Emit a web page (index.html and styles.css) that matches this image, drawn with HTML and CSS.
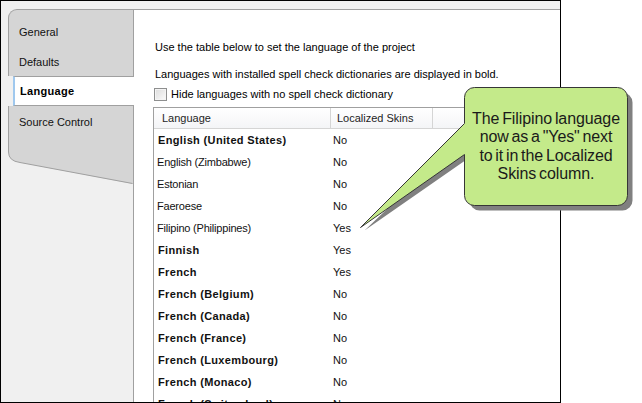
FILE: index.html
```html
<!DOCTYPE html>
<html>
<head>
<meta charset="utf-8">
<link rel="stylesheet" href="styles.css">
</head>
<body>
<div class="stage">
  <div class="frame">
    <div class="main">
      <div class="tabs">
        <div class="tabs-top">
          <div class="tab tab-first">General</div>
          <div class="tab tab-second">Defaults</div>
        </div>
        <div class="tab-selected">Language</div>
        <div class="tabs-bottom">
          <div class="tab">Source Control</div>
        </div>
        <svg class="tail" width="125" height="36" viewBox="0 0 125 36">
          <path d="M0,0 H125 V34 L12,12.5 Q0.5,11 0.5,2 Z" fill="#d5d5d5"/>
          <path d="M0.5,0 V2 Q0.5,11 12,12.5 L124.5,33.5" fill="none" stroke="#a0a0a0" stroke-width="1"/>
        </svg>
      </div>
      <div class="panel">
        <p class="line line-first">Use the table below to set the language of the project</p>
        <p class="line line-second">Languages with installed spell check dictionaries are displayed in bold.</p>
        <div class="check-row">
          <span class="checkbox"></span>
          <span class="check-label">Hide languages with no spell check dictionary</span>
        </div>
        <div class="table">
          <div class="thead">
            <div class="th col-name">Language</div>
            <div class="th col-skin">Localized Skins</div>
            <div class="th col-rest"></div>
          </div>
          <div class="row bold"><div class="cell col-name">English (United States)</div><div class="cell col-skin">No</div></div>
          <div class="row"><div class="cell col-name">English (Zimbabwe)</div><div class="cell col-skin">No</div></div>
          <div class="row"><div class="cell col-name">Estonian</div><div class="cell col-skin">No</div></div>
          <div class="row"><div class="cell col-name">Faeroese</div><div class="cell col-skin">No</div></div>
          <div class="row"><div class="cell col-name">Filipino (Philippines)</div><div class="cell col-skin">Yes</div></div>
          <div class="row bold"><div class="cell col-name">Finnish</div><div class="cell col-skin">Yes</div></div>
          <div class="row bold"><div class="cell col-name">French</div><div class="cell col-skin">Yes</div></div>
          <div class="row bold"><div class="cell col-name">French (Belgium)</div><div class="cell col-skin">No</div></div>
          <div class="row bold"><div class="cell col-name">French (Canada)</div><div class="cell col-skin">No</div></div>
          <div class="row bold"><div class="cell col-name">French (France)</div><div class="cell col-skin">No</div></div>
          <div class="row bold"><div class="cell col-name">French (Luxembourg)</div><div class="cell col-skin">No</div></div>
          <div class="row bold"><div class="cell col-name">French (Monaco)</div><div class="cell col-skin">No</div></div>
          <div class="row bold"><div class="cell col-name">French (Switzerland)</div><div class="cell col-skin">No</div></div>
        </div>
      </div>
    </div>
  </div>

  <svg class="callout-shape" width="287" height="160" viewBox="0 0 287 160">
    <g transform="translate(0.5,0.5)">
      <path class="shadow" d="M124,10 H267 A10,10 0 0 1 277,20 V118 A10,10 0 0 1 267,128 H124 A10,10 0 0 1 114,118 V75 L9,148 L114,48 V20 A10,10 0 0 1 124,10 Z"/>
      <path class="bubble" d="M119,5 H262 A10,10 0 0 1 272,15 V113 A10,10 0 0 1 262,123 H119 A10,10 0 0 1 109,113 V72 L5,145 L109,41 V15 A10,10 0 0 1 119,5 Z"/>
    </g>
  </svg>
  <div class="callout-text">The Filipino language<br>now as a "Yes" next<br>to it in the Localized<br>Skins column.</div>
</div>
</body>
</html>
```
FILE: styles.css
```css
html, body {
  margin: 0;
  padding: 0;
  background: #ffffff;
}

.stage {
  position: relative;
  width: 642px;
  height: 403px;
  overflow: hidden;
  font-family: "Liberation Sans", Arial, sans-serif;
  font-size: 11px;
  color: #000;
}

.frame {
  box-sizing: border-box;
  width: 561px;
  height: 403px;
  border: 1px solid #000;
  background: #f0f0f0;
  padding: 8px 0 0 7px;
  overflow: hidden;
}

.main {
  display: flex;
  height: 100%;
}

/* ---------- tabs ---------- */
.tabs {
  width: 125px;
  flex: none;
  display: flex;
  flex-direction: column;
}

.tabs-top {
  background: #d5d5d5;
  border-left: 1px solid #a0a0a0;
  border-top: 1px solid #a0a0a0;
  border-top-left-radius: 9px;
  padding-top: 7px;
}

.tab {
  display: flex;
  align-items: center;
  padding-left: 10px;
  height: 30px;
  color: #111;
}

.tab-second {
  height: 29px;
}

.tab-selected {
  position: relative;
  z-index: 1;
  margin-left: 5px;
  margin-right: -1px;
  height: 28px;
  background: #ffffff;
  border-top: 1px solid #a0a0a0;
  border-bottom: 1px solid #a0a0a0;
  border-left: 2px solid #9fc8ee;
  padding-left: 5px;
  display: flex;
  align-items: center;
  font-weight: bold;
  letter-spacing: 0.3px;
}

.tabs-bottom {
  background: #d5d5d5;
  border-left: 1px solid #a0a0a0;
  height: 44px;
}

.tabs-bottom .tab {
  height: 31px;
}

.tail {
  display: block;
}

/* ---------- panel ---------- */
.panel {
  flex: 1;
  background: #ffffff;
  border-left: 1px solid #a0a0a0;
  border-top: 1px solid #a0a0a0;
  padding: 30px 0 0 19px;
  overflow: hidden;
}

.line {
  margin: 0;
  padding-left: 2px;
  line-height: 14px;
  white-space: nowrap;
}

.line-second {
  margin-top: 13px;
}

.check-row {
  display: flex;
  align-items: center;
  margin-top: 6px;
  height: 14px;
  margin-left: 1px;
  white-space: nowrap;
}

.checkbox {
  box-sizing: border-box;
  width: 13px;
  height: 13px;
  border: 1px solid #8e8f8f;
  background: linear-gradient(135deg, #dcdcdc, #fbfbfb);
  box-shadow: inset 0 0 0 1px #f4f4f4;
  margin-right: 4px;
}

.check-label {
  line-height: 14px;
}

/* ---------- table ---------- */
.table {
  margin-top: 6px;
  width: 440px;
  border-top: 1px solid #a0a0a0;
  border-left: 1px solid #a0a0a0;
}

.thead {
  display: flex;
  height: 20px;
  border-bottom: 1px solid #d5d5d5;
  background: linear-gradient(#ffffff, #f4f5f7);
  box-shadow: inset 0 1px 0 #ffffff;
}

.th {
  display: flex;
  align-items: center;
  color: #1e1e1e;
}

.thead .col-name {
  width: 168px;
  padding-left: 8px;
  border-right: 1px solid #d5d5d5;
}

.thead .col-skin {
  width: 95px;
  padding-left: 6px;
  border-right: 1px solid #d5d5d5;
}

.thead .col-rest {
  flex: 1;
}

.row {
  display: flex;
  height: 22px;
  align-items: center;
}

.cell {
  white-space: nowrap;
  color: #111;
}

.row .col-name {
  width: 173px;
  padding-left: 3px;
  letter-spacing: -0.2px;
}

.row .col-skin {
  padding-left: 3px;
}

.row.bold .col-name {
  font-weight: bold;
  letter-spacing: 0.35px;
  padding-left: 4px;
  width: 172px;
}

/* ---------- callout ---------- */
.callout-shape {
  position: absolute;
  left: 355px;
  top: 82px;
}

.callout-shape .shadow {
  fill: #808080;
}

.callout-shape .bubble {
  fill: #c4ea8a;
  stroke: #363636;
  stroke-width: 1;
  stroke-linejoin: miter;
}

.callout-text {
  position: absolute;
  left: 464px;
  top: 87px;
  width: 164px;
  height: 119px;
  display: flex;
  align-items: center;
  justify-content: center;
  text-align: center;
  font-family: "Liberation Sans", Arial, sans-serif;
  font-size: 16px;
  line-height: 18.3px;
  letter-spacing: -0.1px;
  word-spacing: -1.5px;
  color: #1a1a1a;
}
```
